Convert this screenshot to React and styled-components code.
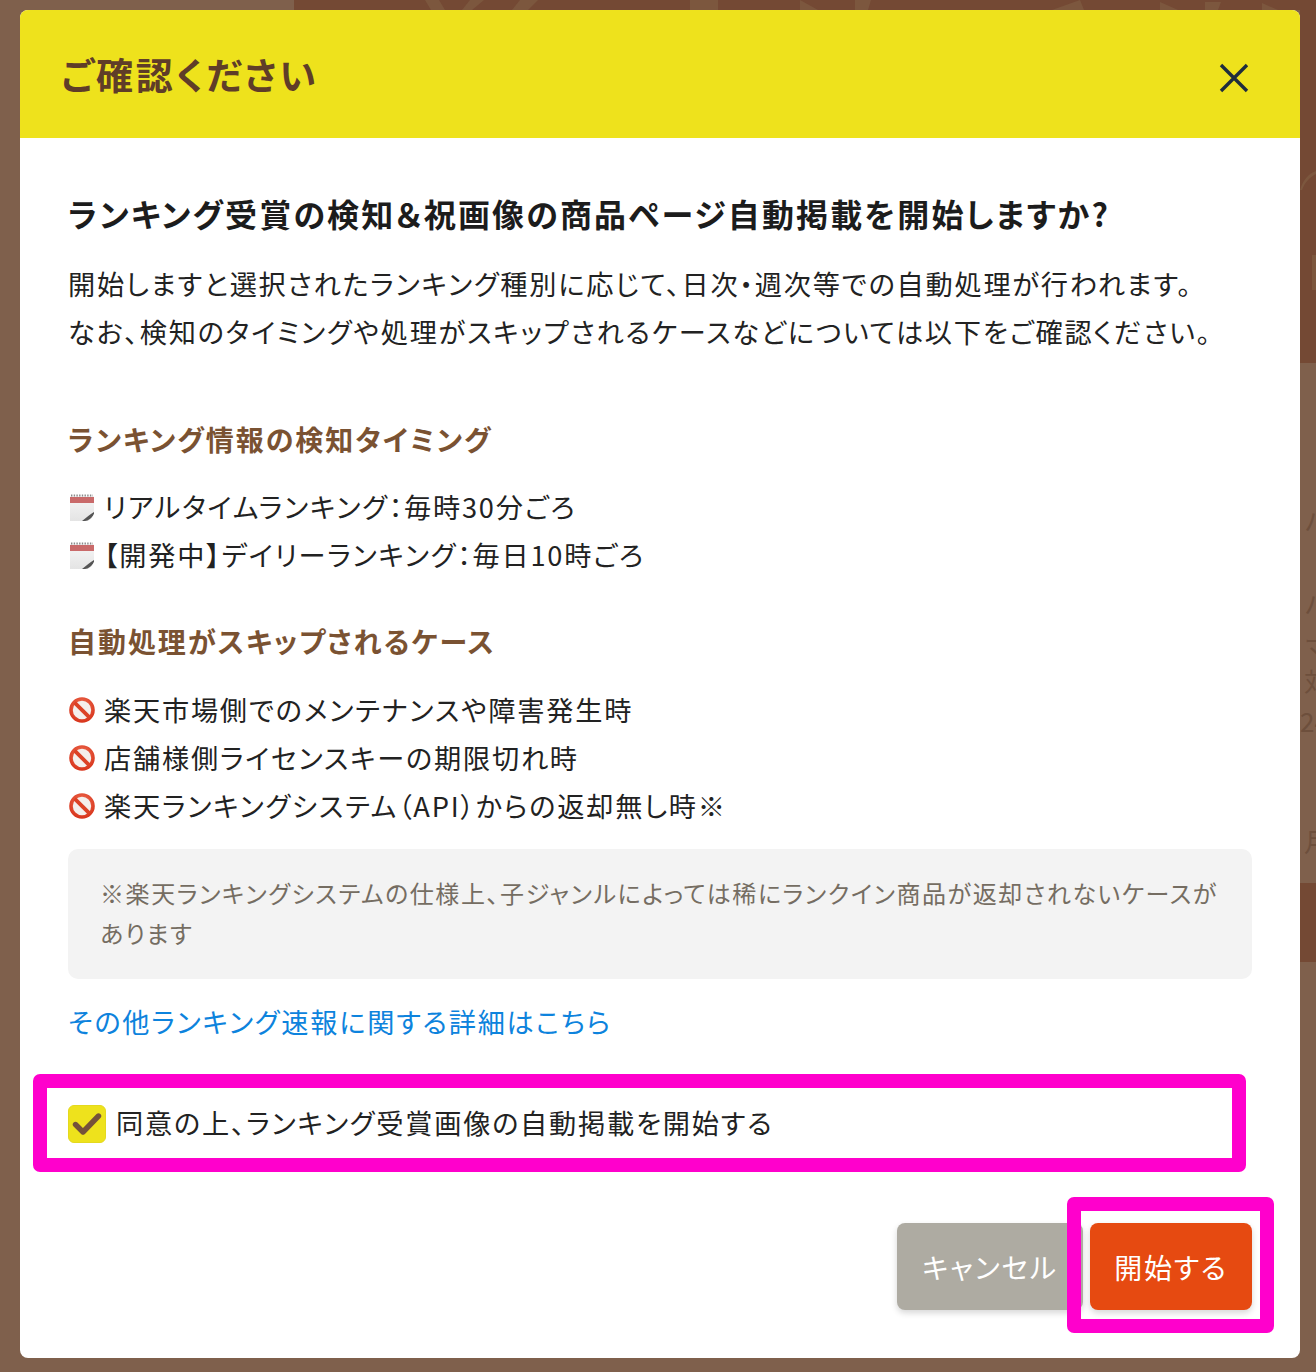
import React from "react";
import styled, { createGlobalStyle } from "styled-components";

const GlobalStyle = createGlobalStyle`
  html, body {
    margin: 0;
    padding: 0;
  }
  body {
    font-family: "Noto Sans CJK JP", "Noto Sans", sans-serif;
    color: #222;
  }
  * {
    box-sizing: border-box;
  }
`;

const Page = styled.div`
  position: relative;
  width: 1316px;
  height: 1372px;
  overflow: hidden;
  background: #7f604c;
  padding: 10px 16px 14px 20px;
`;

// page behind the dimmed overlay
const BackBand = styled.div`
  position: absolute;
  background: #744934;
  left: ${(p) => p.$left}px;
  top: ${(p) => p.$top}px;
  width: ${(p) => p.$width}px;
  height: ${(p) => p.$height}px;
`;

const BackDecor = styled.svg`
  position: absolute;
  left: 0;
  top: 0;
`;

const BackText = styled.span`
  position: absolute;
  left: ${(p) => p.$left}px;
  top: ${(p) => p.$top}px;
  font-size: 26px;
  line-height: 30px;
  color: #6d4f3c;
`;

const Modal = styled.div`
  position: relative;
  height: 100%;
  background: #fff;
  border-radius: 8px;
  overflow: hidden;
`;

const Header = styled.header`
  height: 128px;
  background: #eee21c;
  display: flex;
  align-items: center;
  justify-content: space-between;
  padding: 8px 50px 0 41px;
`;

const Title = styled.h2`
  margin: 0 0 6px;
  font-size: 37px;
  line-height: 1.4;
  font-weight: 700;
  font-feature-settings: "palt";
  letter-spacing: 2.8px;
  color: #5f3d28;
`;

const CloseButton = styled.button`
  width: 32px;
  height: 32px;
  padding: 0;
  border: none;
  background: none;
  color: #1f2d3d;
  display: flex;
  align-items: center;
  justify-content: center;
`;

const Body = styled.div`
  padding: 50px 48px 0;
  font-size: 27.2px;
  line-height: 48px;
  font-feature-settings: "palt";
  letter-spacing: 1.78px;
`;

const Lead = styled.h3`
  margin: 0 0 21px;
  font-size: 32px;
  line-height: 50px;
  font-weight: 700;
  letter-spacing: 2.15px;
  color: #1c1c1c;
`;

const Paragraph = styled.p`
  margin: 0 0 59px;
`;

const SectionTitle = styled.h4`
  margin: 0 0 ${(p) => p.$gap}px;
  font-size: 28px;
  line-height: 50px;
  font-weight: 700;
  letter-spacing: 1.95px;
  color: #7a5232;
`;

const List = styled.ul`
  list-style: none;
  margin: 0 0 ${(p) => p.$gap}px;
  padding: 0;
`;

const Item = styled.li`
  display: flex;
  align-items: center;
  gap: 9px;
  height: 48px;
  padding-left: 1px;
`;

const ItemIcon = styled.svg`
  flex: none;
  margin-top: 2px;
`;

const Note = styled.div`
  background: #f3f3f3;
  border-radius: 10px;
  padding: 24px 32px 26px 32px;
  font-size: 24px;
  line-height: 40px;
  letter-spacing: 1.57px;
  color: #756d62;
`;

const DetailLink = styled.a`
  display: block;
  margin-top: 18px;
  color: #0d83dd;
  text-decoration: none;
`;

const AgreeRow = styled.label`
  position: relative;
  display: flex;
  align-items: center;
  gap: 10px;
  height: 48px;
  margin-top: 55px;
`;

const AgreeText = styled.span`
  padding-bottom: 4px;
`;

const CheckBox = styled.span`
  width: 38px;
  height: 38px;
  border-radius: 6px;
  background: #eee21c;
  border: 1px solid #e4d91e;
  display: flex;
  align-items: center;
  justify-content: center;
`;

const Highlight = styled.span`
  position: absolute;
  border: 14px solid #ff00cc;
  border-radius: 7px;
  pointer-events: none;
  z-index: 2;
`;

const AgreeHighlight = styled(Highlight)`
  left: -35px;
  top: -26px;
  width: 1213px;
  height: 98px;
`;

const Footer = styled.div`
  position: relative;
  display: flex;
  justify-content: flex-end;
  gap: 7px;
  margin-top: 75px;
`;

const Button = styled.button`
  height: 87px;
  width: ${(p) => p.$width}px;
  border: none;
  border-radius: 8px;
  background: ${(p) => p.$bg};
  color: #fff;
  font-family: inherit;
  font-size: 28px;
  font-feature-settings: "palt";
  letter-spacing: 1.8px;
  box-shadow: 0 3px 6px rgba(0, 0, 0, 0.16);
`;

const StartHighlight = styled(Highlight)`
  right: -22px;
  top: -26px;
  width: 207px;
  height: 136px;
`;

const CloseIcon = () => (
  <svg width="32" height="32" viewBox="0 0 32 32" fill="none" stroke="currentColor" strokeWidth="3.4">
    <path d="M3 3 L29 29 M29 3 L3 29" />
  </svg>
);

const CalendarIcon = () => (
  <ItemIcon width="26" height="27" viewBox="0 0 26 27">
    <defs>
      <linearGradient id="sheet" x1="0" y1="0" x2="0" y2="1">
        <stop offset="0" stopColor="#f6f6f6" />
        <stop offset="1" stopColor="#e4e4e4" />
      </linearGradient>
    </defs>
    <rect x="1" y="2" width="24" height="25" fill="url(#sheet)" />
    <rect x="1" y="3" width="24" height="6" fill="#c96a6a" />
    <path d="M2 1.5h22" stroke="#8a8a8a" strokeWidth="2" strokeDasharray="1.4 1.3" />
    <path d="M13 27 C17 24 20 21 25 18 L25 20 C23 24 19 27 16 27 Z" fill="#555" />
    <path d="M19 27 C22 25 24 23 25 20 L25 27 Z" fill="#fff" />
  </ItemIcon>
);

const BanIcon = () => (
  <ItemIcon width="26" height="26" viewBox="0 0 26 26">
    <defs>
      <radialGradient id="ban" cx="0.5" cy="0.35" r="0.7">
        <stop offset="0" stopColor="#f2765a" />
        <stop offset="1" stopColor="#d8351c" />
      </radialGradient>
    </defs>
    <circle cx="13" cy="13" r="11" fill="#f4efec" stroke="url(#ban)" strokeWidth="3.6" />
    <path d="M5.6 5.6 L20.4 20.4" stroke="#dc4226" strokeWidth="3.8" />
  </ItemIcon>
);

const CheckIcon = () => (
  <svg width="30" height="26" viewBox="0 0 30 26" fill="none" stroke="#75513a" strokeWidth="5.4" strokeLinecap="round" strokeLinejoin="round">
    <path d="M3.5 13.5 L11 21 L26.5 5" />
  </svg>
);

export default function App() {
  return (
    <Page>
      <GlobalStyle />
      <BackBand $left={294} $top={0} $width={1022} $height={10} />
      <BackBand $left={1300} $top={0} $width={16} $height={363} />
      <BackBand $left={1300} $top={883} $width={16} $height={79} />
      <BackDecor width="1316" height="300" viewBox="0 0 1316 300" fill="#846247" fillOpacity="0.55">
        <path d="M425 0h14l6 10h-14z" />
        <path d="M470 0h14l-12 10h-10z" />
        <path d="M520 0h18l-10 10h-16z" />
        <rect x="690" y="0" width="28" height="10" />
        <path d="M800 0l18 10h-18z" />
        <path d="M855 0h16l-3 10h-13z" />
        <path d="M1080 0l-28 10h32z" />
        <path d="M1160 2l18 8h-18z" />
        <path d="M1205 2h16l-3 8h-13z" />
        <path d="M1262 3l16 7h-16z" />
        <path d="M1300 190c3-10 8-16 16-19v3c-6 3-11 8-14 16z" />
        <rect x="1312" y="255" width="4" height="35" />
      </BackDecor>
      <BackText $left={1304} $top={505}>ハ</BackText>
      <BackText $left={1304} $top={588}>ハ</BackText>
      <BackText $left={1304} $top={632}>マ</BackText>
      <BackText $left={1304} $top={666}>対</BackText>
      <BackText $left={1300} $top={706}>24</BackText>
      <BackText $left={1304} $top={826}>月</BackText>

      <Modal>
        <Header>
          <Title>ご確認ください</Title>
          <CloseButton aria-label="閉じる">
            <CloseIcon />
          </CloseButton>
        </Header>
        <Body>
          <Lead>ランキング受賞の検知＆祝画像の商品ページ自動掲載を開始しますか?</Lead>
          <Paragraph>
            開始しますと選択されたランキング種別に応じて、日次・週次等での自動処理が行われます。
            <br />
            なお、検知のタイミングや処理がスキップされるケースなどについては以下をご確認ください。
          </Paragraph>

          <SectionTitle $gap={18}>ランキング情報の検知タイミング</SectionTitle>
          <List $gap={38}>
            <Item>
              <CalendarIcon />
              リアルタイムランキング：毎時30分ごろ
            </Item>
            <Item>
              <CalendarIcon />
              【開発中】デイリーランキング：毎日10時ごろ
            </Item>
          </List>

          <SectionTitle $gap={19}>自動処理がスキップされるケース</SectionTitle>
          <List $gap={20}>
            <Item>
              <BanIcon />
              楽天市場側でのメンテナンスや障害発生時
            </Item>
            <Item>
              <BanIcon />
              店舗様側ライセンスキーの期限切れ時
            </Item>
            <Item>
              <BanIcon />
              楽天ランキングシステム（API）からの返却無し時※
            </Item>
          </List>

          <Note>
            ※楽天ランキングシステムの仕様上、子ジャンルによっては稀にランクイン商品が返却されないケースがあります
          </Note>
          <DetailLink href="#">その他ランキング速報に関する詳細はこちら</DetailLink>

          <AgreeRow>
            <CheckBox>
              <CheckIcon />
            </CheckBox>
            <AgreeText>同意の上、ランキング受賞画像の自動掲載を開始する</AgreeText>
            <AgreeHighlight />
          </AgreeRow>

          <Footer>
            <Button $width={186} $bg="#aeaba2">キャンセル</Button>
            <Button $width={162} $bg="#e64a11">開始する</Button>
            <StartHighlight />
          </Footer>
        </Body>
      </Modal>
    </Page>
  );
}
